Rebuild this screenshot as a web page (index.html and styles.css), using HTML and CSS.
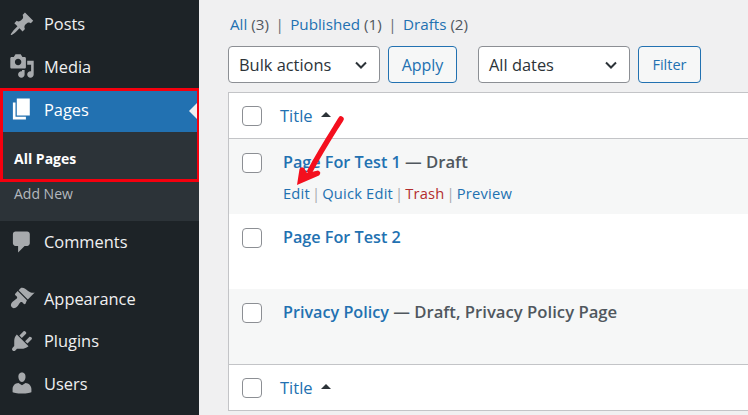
FILE: index.html
```html
<!DOCTYPE html>
<html lang="en">
<head>
<meta charset="utf-8">
<title>Pages</title>
<link rel="stylesheet" href="styles.css">
</head>
<body>
<aside class="sidebar">
  <a class="item first"><svg class="ico" viewBox="0 0 20 20"><path d="M10.44 3.02l1.82-1.82 6.36 6.35-1.83 1.82c-1.05-.68-2.48-.57-3.41.36l-.75.75c-.92.93-1.04 2.35-.35 3.41l-1.83 1.82-2.41-2.41-2.8 2.79c-.42.42-3.38 2.71-3.8 2.29s1.86-3.39 2.28-3.81l2.79-2.79L4.1 9.36l1.83-1.82c1.05.69 2.48.57 3.4-.36l.75-.75c.93-.92 1.05-2.35.36-3.41z"/></svg>Posts</a>
  <a class="item"><svg class="ico" viewBox="0 0 20 20"><path d="M13 11V4c0-.55-.45-1-1-1h-1.67L9 1H5L3.67 3H2c-.55 0-1 .45-1 1v7c0 .55.45 1 1 1h10c.55 0 1-.45 1-1zM7 4.5c1.38 0 2.5 1.12 2.5 2.5S8.38 9.5 7 9.5 4.5 8.38 4.5 7 5.62 4.5 7 4.5zM14 6h5v10.5c0 1.38-1.12 2.5-2.5 2.5S14 17.88 14 16.5s1.12-2.5 2.5-2.5c.17 0 .34.02.5.05V9h-3V6zm-4 8.05V13h2v3.5c0 1.38-1.12 2.5-2.5 2.5S7 17.88 7 16.5 8.12 14 9.5 14c.17 0 .34.02.5.05z"/></svg>Media</a>
  <div class="section">
    <div class="highlight">
      <a class="item current"><svg class="ico" viewBox="0 0 20 20"><path d="M6 15V2h10v13H6zm-1 1h8v2H3V5h2v11z"/></svg>Pages</a>
      <a class="subitem active">All Pages</a>
    </div>
    <a class="subitem muted">Add New</a>
  </div>
  <a class="item"><svg class="ico" viewBox="0 0 20 20"><path d="M5 2h9c1.1 0 2 .9 2 2v7c0 1.1-.9 2-2 2h-2l-5 5v-5H5c-1.1 0-2-.9-2-2V4c0-1.1.9-2 2-2z"/></svg>Comments</a>
  <a class="item spaced"><svg class="ico" viewBox="0 0 20 20"><path d="M14.48 11.06L7.41 3.99l1.5-1.5c.5-.56 2.3-.47 3.51.32 1.21.8 1.43 1.28 2.91 2.1 1.18.64 2.45 1.26 4.45.85zm-.71.71L6.7 4.7 4.93 6.47c-.39.39-.39 1.02 0 1.41l1.06 1.06c.39.39.39 1.03 0 1.42-.6.6-1.43 1.11-2.21 1.69-.35.26-.7.53-1.01.84-1.34 1.34-1.78 2.81-.77 4.11s2.93.92 4.28-.42c.31-.31.58-.66.84-1.01.58-.78 1.09-1.61 1.69-2.21.39-.39 1.02-.39 1.41 0l1.06 1.06c.39.39 1.02.39 1.41 0z"/></svg>Appearance</a>
  <a class="item"><svg class="ico" viewBox="0 0 20 20"><path d="M13.11 4.36L9.87 7.6 8 5.73l3.24-3.24c.35-.34 1.05-.2 1.56.32.52.51.66 1.21.31 1.55zm-8 1.77l.91-1.12 9.01 9.01-1.19.84c-.71.71-2.63 1.16-3.82 1.16H6.14L4.9 17.26c-.59.59-1.54.59-2.12 0-.59-.58-.59-1.53 0-2.12l1.24-1.24v-3.88c0-1.13.4-3.19 1.09-3.89zm7.26 3.97l3.24-3.24c.34-.35 1.04-.21 1.55.31.52.51.66 1.21.31 1.55l-3.24 3.25z"/></svg>Plugins</a>
  <a class="item"><svg class="ico" viewBox="0 0 20 20"><path d="M10 9.25c-2.27 0-2.73-3.44-2.73-3.44C7 4.02 7.82 2 9.97 2c2.16 0 2.98 2.02 2.71 3.81 0 0-.41 3.44-2.68 3.44zm0 2.57L12.72 10c2.39 0 4.52 2.33 4.52 4.53v2.49s-3.65 1.13-7.24 1.13c-3.65 0-7.24-1.13-7.24-1.13v-2.49c0-2.25 1.94-4.48 4.47-4.48z"/></svg>Users</a>
</aside>
<main class="content">
  <nav class="views"><a>All</a> <span class="count">(3)</span><i>|</i><a>Published</a> <span class="count">(1)</span><i>|</i><a>Drafts</a> <span class="count">(2)</span></nav>
  <div class="toolbar">
    <div class="select"><span>Bulk actions</span><svg viewBox="0 0 20 20"><path d="M5 7.5l5 5 5-5" fill="none" stroke="#2c3338" stroke-width="2"/></svg></div>
    <button class="btn apply">Apply</button>
    <div class="select dates"><span>All dates</span><svg viewBox="0 0 20 20"><path d="M5 7.5l5 5 5-5" fill="none" stroke="#2c3338" stroke-width="2"/></svg></div>
    <button class="btn filter">Filter</button>
  </div>
  <div class="table">
    <div class="row head"><span class="check"></span><a class="col">Title</a><span class="sort"></span></div>
    <div class="row page alt">
      <span class="check"></span>
      <div class="cell">
        <div class="title"><a>Page For Test 1</a> <span class="state">— Draft</span></div>
        <div class="actions"><a>Edit</a><i>|</i><a>Quick Edit</a><i>|</i><a class="trash">Trash</a><i>|</i><a>Preview</a></div>
      </div>
    </div>
    <div class="row page">
      <span class="check"></span>
      <div class="cell"><div class="title"><a>Page For Test 2</a></div></div>
    </div>
    <div class="row page alt">
      <span class="check"></span>
      <div class="cell"><div class="title"><a>Privacy Policy</a> <span class="state">— Draft, Privacy Policy Page</span></div></div>
    </div>
    <div class="row head foot"><span class="check"></span><a class="col">Title</a><span class="sort"></span></div>
  </div>
</main>
<svg class="arrow" viewBox="0 0 80 80" aria-hidden="true"><path d="M51 6 C43 19 33 34 20 58" fill="none" stroke="#f40f1e" stroke-width="5.5" stroke-linecap="round"/><path d="M7 72 L9.5 56 Q11 53 14 55 L17 60 L28 57.5 Q32 59 29 62.5 Z" fill="#f40f1e"/></svg>
</body>
</html>
```
FILE: styles.css
```css
* { box-sizing: border-box; }
html, body { margin: 0; height: 100%; }
body {
  display: flex;
  position: relative;
  width: 748px;
  height: 415px;
  overflow: hidden;
  background: #f0f0f1;
  font-family: "Open Sans", "Noto Sans", sans-serif;
  color: #50575e;
}
.sidebar {
  flex: 0 0 199px;
  background: #1d2327;
  color: #f0f0f1;
  padding-top: 2.5px;
}
.item {
  display: flex;
  align-items: center;
  height: 42.5px;
  padding-left: 9px;
  font-size: 16.4px;
}
.item.spaced { margin-top: 14px; }
.ico {
  flex: 0 0 26px;
  width: 26px;
  height: 26px;
  margin-right: 9px;
  fill: #a7aaad;
}
.section { background: #2c3338; padding-bottom: 15px; }
.highlight { border: 3px solid #f5000e; border-right-width: 2px; }
.current {
  position: relative;
  height: 41px;
  padding: 0 0 4px 6px;
  background: #2271b1;
  color: #fff;
}
.current .ico { fill: #fff; }
.current::after {
  content: "";
  position: absolute;
  right: 0;
  top: 12px;
  border: 8px solid transparent;
  border-right-color: #f0f0f1;
  border-left-width: 0;
}
.subitem {
  display: flex;
  align-items: center;
  height: 24px;
  padding-left: 14px;
  font-size: 14px;
}
.highlight .subitem { height: 47px; padding: 7px 0 0 11px; }
.active { font-weight: 700; color: #fff; }
.muted { color: #b4b9be; }
.content { flex: 1; min-width: 0; padding: 14px 0 0 29px; }
.views { height: 23px; margin-left: 2px; font-size: 15.2px; line-height: 20px; white-space: nowrap; }
.views a { color: #2271b1; }
.views i { font-style: normal; color: #646970; margin: 0 6.5px; }
.count { color: #50575e; }
.toolbar { display: flex; margin-top: 9px; height: 37px; }
.select {
  display: flex;
  align-items: center;
  justify-content: space-between;
  width: 152px;
  padding: 0 8px 0 10px;
  background: #fff;
  border: 1px solid #8c8f94;
  border-radius: 4px;
  font-size: 16.4px;
  color: #2c3338;
}
.select svg { width: 20px; height: 20px; }
.dates { margin-left: 21px; }
.btn {
  margin-left: 8px;
  padding: 0;
  background: #f6f7f7;
  border: 1px solid #2271b1;
  border-radius: 4px;
  color: #2271b1;
  font: 15px "Open Sans", "Noto Sans", sans-serif;
}
.apply { width: 69px; font-size: 16px; }
.filter { width: 63px; font-size: 14.5px; }
.table {
  margin-top: 9px;
  background: #fff;
  border: 1px solid #c3c4c7;
  border-right: 0;
}
.row { display: flex; align-items: flex-start; }
.head { height: 46px; border-bottom: 1px solid #c3c4c7; align-items: center; padding-left: 13px; }
.foot { border-bottom: 0; border-top: 1px solid #c3c4c7; height: 46px; }
.check {
  flex: 0 0 20px;
  height: 20px;
  background: #fff;
  border: 1px solid #8c8f94;
  border-radius: 4px;
}
.col { margin-left: 18px; font-size: 16.5px; color: #2271b1; }
.sort {
  margin: 0 0 3px 8px;
  border: 5px solid transparent;
  border-top-width: 0;
  border-bottom-color: #2c3338;
}
.page { height: 75px; padding: 14px 0 0 13px; background: #fff; }
.alt { background: #f6f7f7; }
.cell { margin-left: 21px; margin-top: -3px; }
.title { height: 33px; font-size: 16.2px; line-height: 24px; font-weight: 600; white-space: nowrap; }
.title a { color: #2271b1; }
.state { font-size: 16.7px; color: #50575e; }
.actions { font-size: 14.7px; line-height: 20px; color: #a7aaad; white-space: nowrap; letter-spacing: .2px; }
.actions a { color: #2271b1; }
.actions .trash { color: #b32d2e; }
.actions i { font-style: normal; margin: 0 2px; }
.arrow { position: absolute; left: 290px; top: 113px; width: 80px; height: 80px; }
```
